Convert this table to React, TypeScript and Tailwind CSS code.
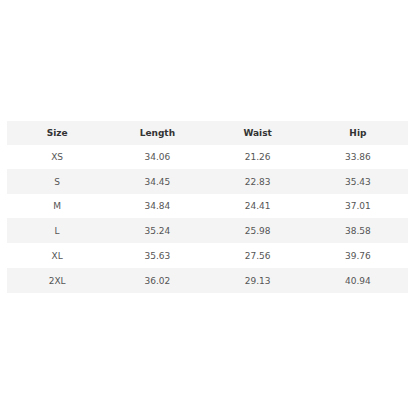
const headers = ['Size', 'Length', 'Waist', 'Hip'];

const rows: { cells: string[]; h: string }[] = [
  { cells: ['XS', '34.06', '21.26', '33.86'], h: 'h-[24px]' },
  { cells: ['S', '34.45', '22.83', '35.43'], h: 'h-[25px]' },
  { cells: ['M', '34.84', '24.41', '37.01'], h: 'h-[24px]' },
  { cells: ['L', '35.24', '25.98', '38.58'], h: 'h-[25px]' },
  { cells: ['XL', '35.63', '27.56', '39.76'], h: 'h-[25px]' },
  { cells: ['2XL', '36.02', '29.13', '40.94'], h: 'h-[25px]' },
];

export default function App(): JSX.Element {
  return (
    <div
      className="h-[416px] w-[416px] bg-white pl-[7px] pr-[8px] pt-[121px]"
      style={{ fontFamily: '"DejaVu Sans", Verdana, sans-serif' }}
    >
      <div className="flex flex-col text-[9px]">
        <div className="grid h-[24px] grid-cols-4 items-center bg-[#f4f4f4] pt-[2px] font-bold text-[#333]">
          {headers.map((h) => (
            <div key={h} className="text-center">
              {h}
            </div>
          ))}
        </div>
        {rows.map((row, i) => (
          <div
            key={row.cells[0]}
            className={`grid grid-cols-4 items-center pt-[2px] text-[#555] ${row.h} ${
              i % 2 === 1 ? 'bg-[#f4f4f4]' : 'bg-white'
            }`}
          >
            {row.cells.map((c, j) => (
              <div key={j} className="text-center">
                {c}
              </div>
            ))}
          </div>
        ))}
      </div>
    </div>
  );
}
